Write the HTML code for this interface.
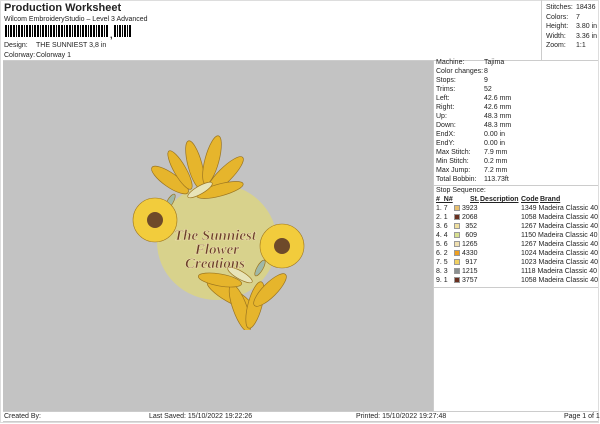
<!DOCTYPE html>
<html><head><style>
body{margin:0;width:600px;height:424px;background:#fff;font-family:"Liberation Sans",sans-serif;color:#222;position:relative;overflow:hidden}
.a{position:absolute;white-space:nowrap;font-size:7px;line-height:9px}
.r{position:absolute;font-size:7px;line-height:9px;white-space:nowrap}
.sw{display:inline-block;width:6px;height:6px;vertical-align:-1px;border:1px solid #999;box-sizing:border-box}
</style></head><body>
<div style="position:absolute;left:0;top:0;width:599px;height:423px;border:1px solid #ddd;box-sizing:border-box"></div>
<div class="a" style="left:4px;top:2px;font-size:11px;font-weight:bold;line-height:13px">Production Worksheet</div>
<div class="a" style="left:4px;top:15px">Wilcom EmbroideryStudio – Level 3 Advanced</div>
<div style="position:absolute;left:5px;top:25px;width:104px;height:12px;background:repeating-linear-gradient(90deg,#000 0 2px,#fff 2px 3px,#000 3px 4px,#fff 4px 5px,#000 5px 7px,#fff 7px 8px)"></div>
<div style="position:absolute;left:114px;top:25px;width:17px;height:12px;background:repeating-linear-gradient(90deg,#000 0 2px,#fff 2px 3px,#000 3px 4px,#fff 4px 5px)"></div>
<div class="a" style="left:110px;top:31px;font-weight:bold;font-size:9px">,</div>
<div class="a" style="left:4px;top:41px">Design:</div><div class="a" style="left:36px;top:41px">THE SUNNIEST 3,8 in</div>
<div class="a" style="left:4px;top:51px">Colorway:</div><div class="a" style="left:36px;top:51px">Colorway 1</div>
<div style="position:absolute;left:541px;top:0;width:1px;height:60px;background:#ccc"></div>
<div class="a" style="left:546px;top:3px">Stitches:</div><div class="a" style="left:576px;top:3px">18436</div>
<div class="a" style="left:546px;top:13px">Colors:</div><div class="a" style="left:576px;top:13px">7</div>
<div class="a" style="left:546px;top:22px">Height:</div><div class="a" style="left:576px;top:22px">3.80 in</div>
<div class="a" style="left:546px;top:32px">Width:</div><div class="a" style="left:576px;top:32px">3.36 in</div>
<div class="a" style="left:546px;top:41px">Zoom:</div><div class="a" style="left:576px;top:41px">1:1</div>
<div style="position:absolute;left:3px;top:60px;width:595px;height:1px;background:#ccc"></div>
<div style="position:absolute;left:3px;top:61px;width:430px;height:350px;background:#c3c3c3"></div>
<div style="position:absolute;left:433px;top:61px;width:1px;height:350px;background:#ccc"></div>
<svg style="position:absolute;left:120px;top:130px" width="200" height="200" viewBox="0 0 200 200">
<ellipse cx="97" cy="112" rx="60" ry="58" fill="#d8d28c"/>
<g stroke="#9a7420" stroke-width=".7">
<g fill="#e6b52c">
<ellipse cx="75" cy="35" rx="7" ry="25" transform="rotate(-15 75 35)"/>
<ellipse cx="92" cy="30" rx="7" ry="25" transform="rotate(15 92 30)"/>
<ellipse cx="105" cy="45" rx="7" ry="25" transform="rotate(45 105 45)"/>
<ellipse cx="100" cy="60" rx="6" ry="24" transform="rotate(75 100 60)"/>
<ellipse cx="50" cy="50" rx="7" ry="22" transform="rotate(-55 50 50)"/>
<ellipse cx="60" cy="40" rx="6" ry="22" transform="rotate(-30 60 40)"/>
<ellipse cx="110" cy="165" rx="7" ry="26" transform="rotate(-60 110 165)"/>
<ellipse cx="120" cy="178" rx="7" ry="25" transform="rotate(-20 120 178)"/>
<ellipse cx="135" cy="175" rx="7" ry="24" transform="rotate(15 135 175)"/>
<ellipse cx="150" cy="160" rx="7" ry="22" transform="rotate(45 150 160)"/>
<ellipse cx="100" cy="150" rx="6" ry="22" transform="rotate(-80 100 150)"/>
</g>
<g fill="#e8e4b8">
<ellipse cx="80" cy="60" rx="4" ry="14" transform="rotate(60 80 60)"/>
<ellipse cx="120" cy="145" rx="4" ry="14" transform="rotate(-60 120 145)"/>
</g>
<g fill="#9fb8a8">
<ellipse cx="50" cy="72" rx="3" ry="9" transform="rotate(30 50 72)"/>
<ellipse cx="140" cy="138" rx="3" ry="9" transform="rotate(30 140 138)"/>
</g>
</g>
<g fill="#f2cc3c" stroke="#a07820" stroke-width=".6">
<circle cx="35" cy="90" r="22"/><circle cx="162" cy="116" r="22"/></g>
<g fill="#6e4a2a"><circle cx="35" cy="90" r="8"/><circle cx="162" cy="116" r="8"/></g>
<g fill="#6b3f2a" stroke="#f0e0b0" stroke-width=".5" font-family="Liberation Serif,serif" font-style="italic" font-weight="bold" text-anchor="middle" font-size="15">
<text x="95" y="110">The Sunniest</text><text x="97" y="124">Flower</text><text x="95" y="138">Creations</text></g>
</svg>
<div class="r" style="left:436px;top:58px;line-height:9px">Machine:<br>Color changes:<br>Stops:<br>Trims:<br>Left:<br>Right:<br>Up:<br>Down:<br>EndX:<br>EndY:<br>Max Stitch:<br>Min Stitch:<br>Max Jump:<br>Total Bobbin:</div>
<div class="r" style="left:484px;top:58px;line-height:9px">Tajima<br>8<br>9<br>52<br>42.6 mm<br>42.6 mm<br>48.3 mm<br>48.3 mm<br>0.00 in<br>0.00 in<br>7.9 mm<br>0.2 mm<br>7.2 mm<br>113.73ft</div>
<div style="position:absolute;left:434px;top:185px;width:164px;height:1px;background:#ccc"></div>
<div class="r" style="left:436px;top:186px">Stop Sequence:</div>
<div class="r" style="left:436px;top:195px;font-weight:bold;text-decoration:underline">#&nbsp; N#</div>
<div class="r" style="left:470px;top:195px;font-weight:bold;text-decoration:underline">St.</div>
<div class="r" style="left:480px;top:195px;font-weight:bold;text-decoration:underline">Description</div>
<div class="r" style="left:521px;top:195px;font-weight:bold;text-decoration:underline">Code</div>
<div class="r" style="left:540px;top:195px;font-weight:bold;text-decoration:underline">Brand</div>
<div class="r" style="left:436px;top:204px">1. 7<br>2. 1<br>3. 6<br>4. 4<br>5. 6<br>6. 2<br>7. 5<br>8. 3<br>9. 1</div>
<div class="r" style="left:454px;top:204px"><span class="sw" style="background:#e8c070"></span><br><span class="sw" style="background:#6a3020"></span><br><span class="sw" style="background:#f0e0a0"></span><br><span class="sw" style="background:#d8e090"></span><br><span class="sw" style="background:#f0e0b0"></span><br><span class="sw" style="background:#f0a020"></span><br><span class="sw" style="background:#f0d060"></span><br><span class="sw" style="background:#8a9090"></span><br><span class="sw" style="background:#6a3020"></span></div>
<div class="r" style="left:462px;top:204px;text-align:right;width:15px">3923<br>2068<br>352<br>609<br>1265<br>4330<br>917<br>1215<br>3757</div>
<div class="r" style="left:521px;top:204px">1349 Madeira Classic 40<br>1058 Madeira Classic 40<br>1267 Madeira Classic 40<br>1150 Madeira Classic 40<br>1267 Madeira Classic 40<br>1024 Madeira Classic 40<br>1023 Madeira Classic 40<br>1118 Madeira Classic 40<br>1058 Madeira Classic 40</div>
<div style="position:absolute;left:434px;top:287px;width:164px;height:1px;background:#ccc"></div>
<div style="position:absolute;left:3px;top:411px;width:595px;height:1px;background:#ccc"></div>
<div style="position:absolute;left:3px;top:421px;width:595px;height:1px;background:#ccc"></div>
<div class="a" style="left:4px;top:412px">Created By:</div>
<div class="a" style="left:149px;top:412px">Last Saved: 15/10/2022 19:22:26</div>
<div class="a" style="left:356px;top:412px">Printed: 15/10/2022 19:27:48</div>
<div class="a" style="left:564px;top:412px">Page 1 of 1</div>
</body></html>
